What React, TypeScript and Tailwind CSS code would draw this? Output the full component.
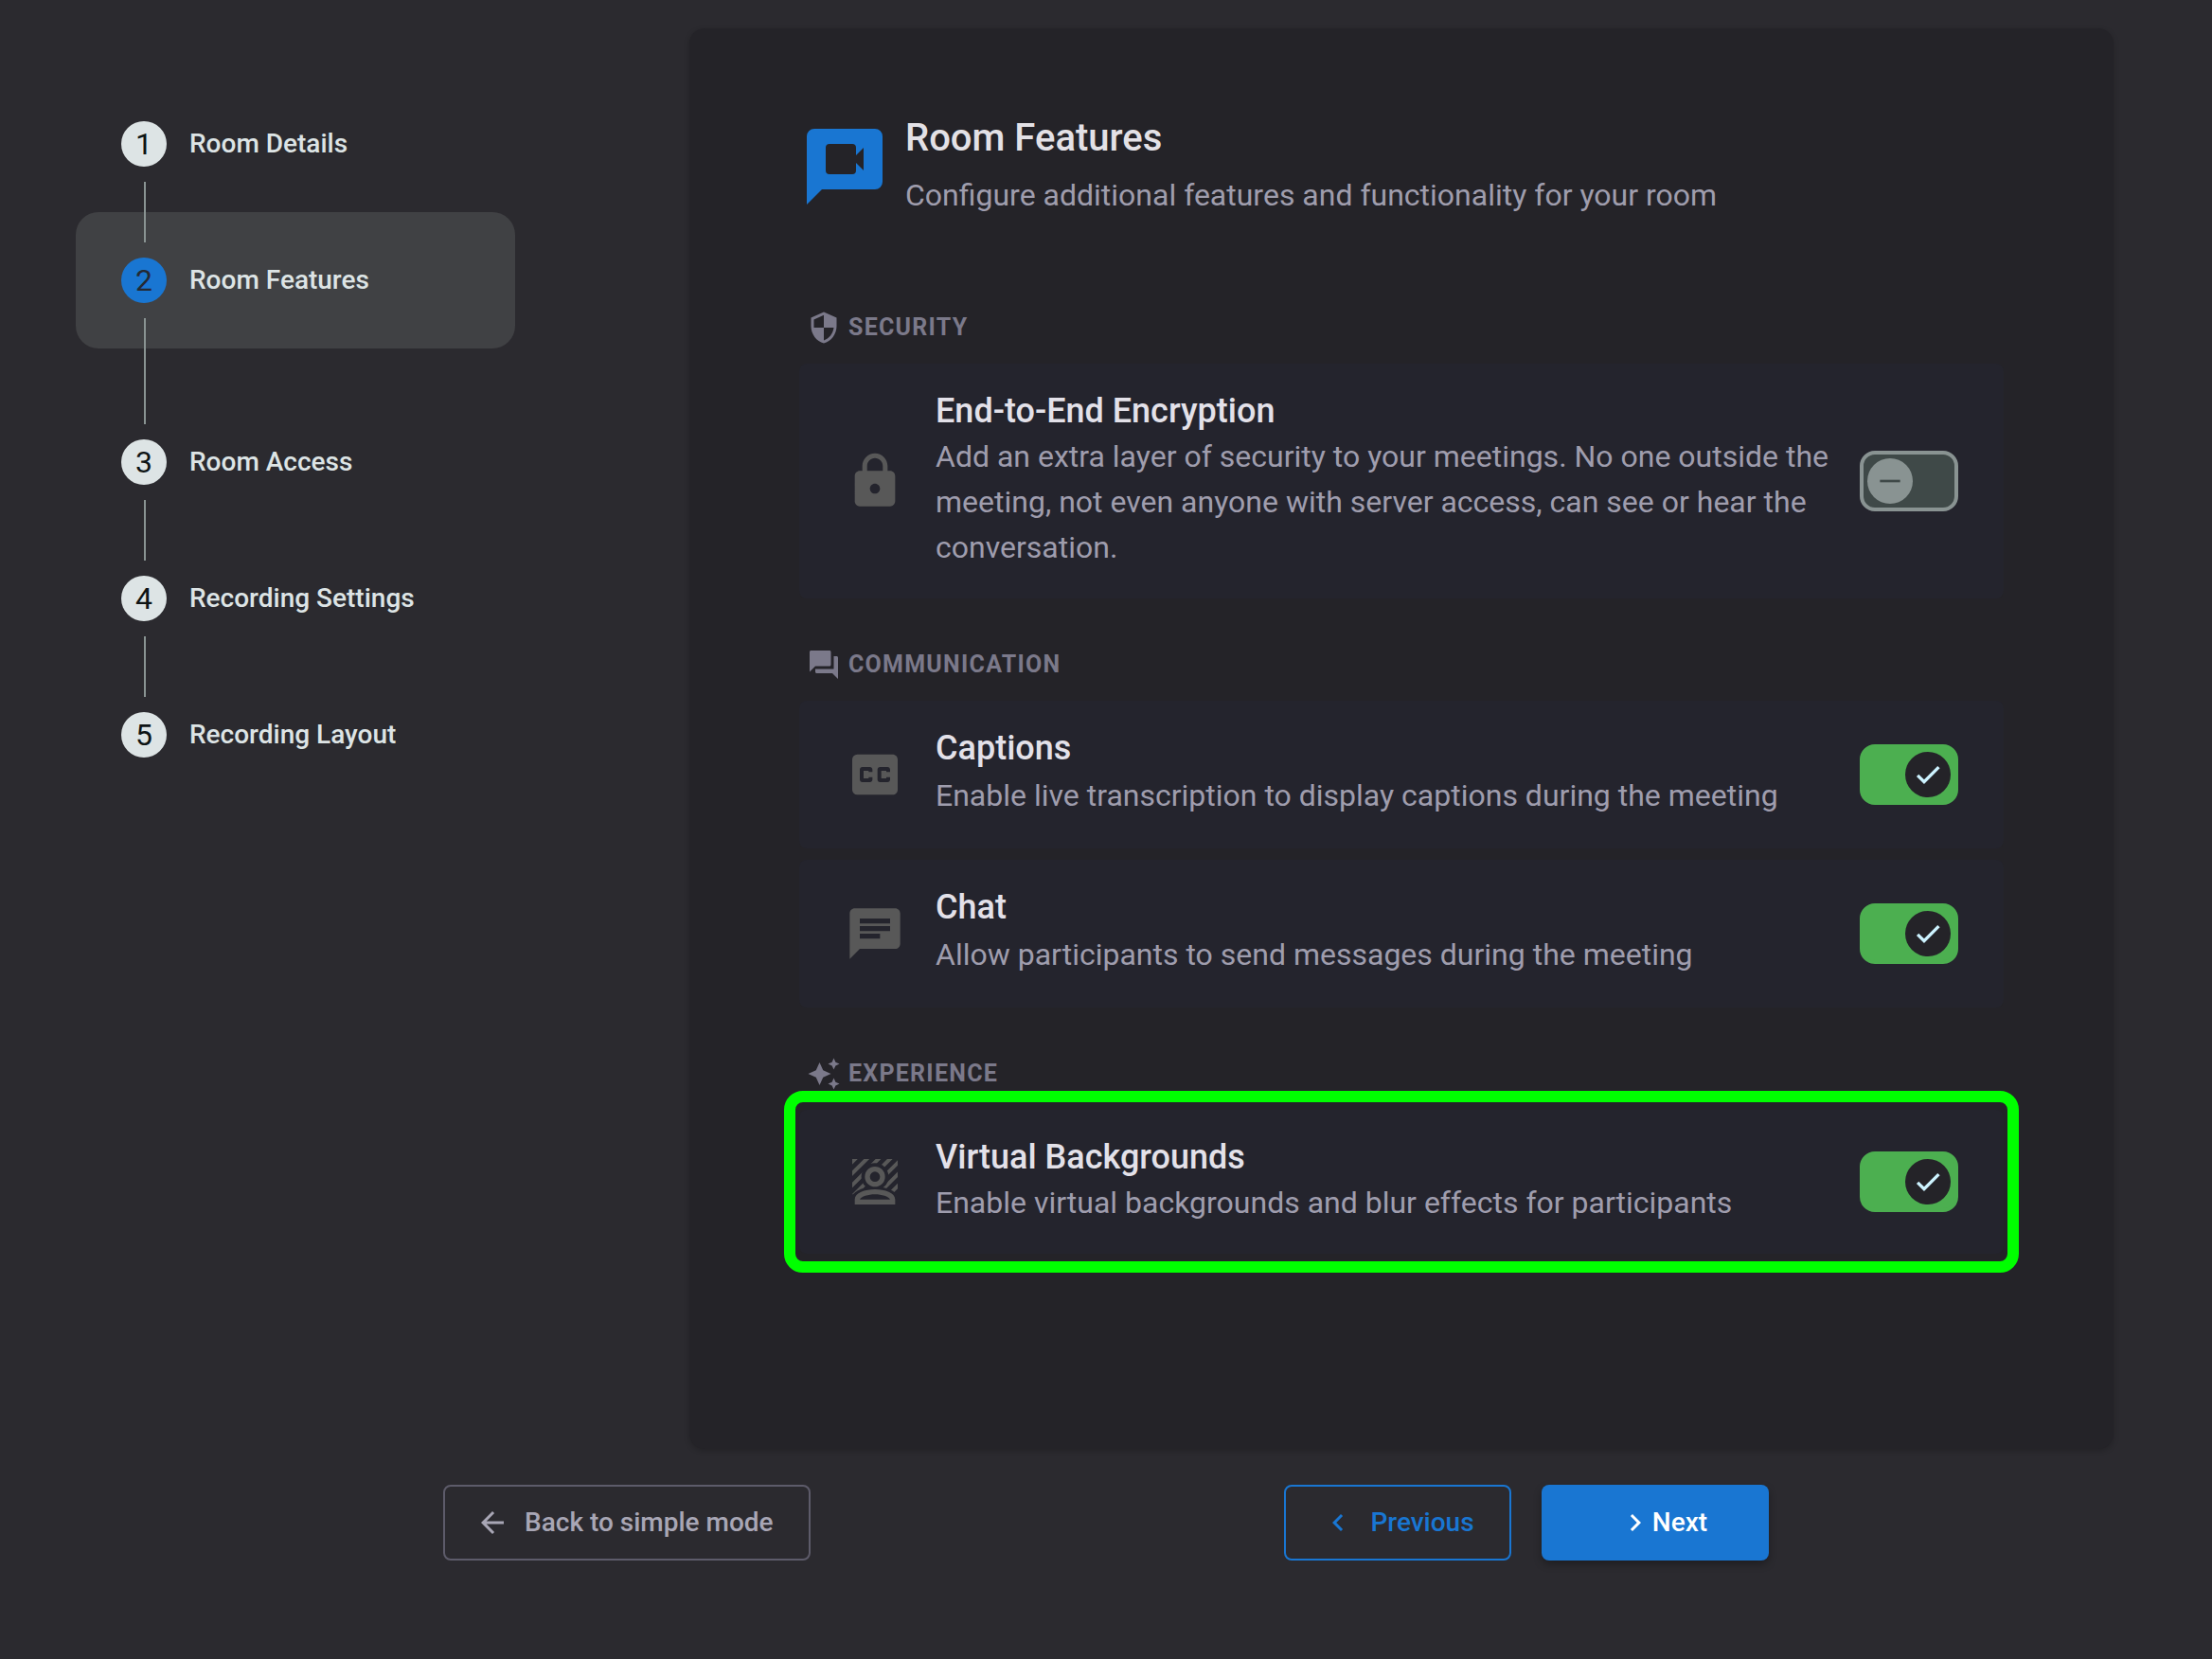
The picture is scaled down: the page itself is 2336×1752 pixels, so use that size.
import { FC, ReactNode, useState } from "react";
import {
  MdArrowBack,
  MdAutoAwesome,
  MdChat,
  MdChevronLeft,
  MdChevronRight,
  MdClosedCaption,
  MdForum,
  MdLock,
  MdSecurity,
} from "react-icons/md";

type Step = {
  id: number;
  label: string;
};

const steps: Step[] = [
  { id: 1, label: "Room Details" },
  { id: 2, label: "Room Features" },
  { id: 3, label: "Room Access" },
  { id: 4, label: "Recording Settings" },
  { id: 5, label: "Recording Layout" },
];

const VideoChatIcon: FC = () => (
  <svg
    viewBox="0 0 24 24"
    className="size-24 shrink-0 text-[#1976d2]"
    fill="currentColor"
    aria-hidden="true"
  >
    <path
      fillRule="evenodd"
      d="M4 2h16a2 2 0 0 1 2 2v12a2 2 0 0 1-2 2H6l-4 4V4a2 2 0 0 1 2-2zM8 6a1 1 0 0 0-1 1v6a1 1 0 0 0 1 1h6a1 1 0 0 0 1-1v-2l2 2V7l-2 2V7a1 1 0 0 0-1-1z"
    />
  </svg>
);

const BackgroundIcon: FC = () => (
  <svg viewBox="0 0 24 24" className="size-16" fill="currentColor" aria-hidden="true">
    {/* stripes stay clear of the head and the shoulders */}
    <mask id="stripes" maskUnits="userSpaceOnUse" x="3" y="3" width="18" height="18">
      <rect x="3" y="3" width="18" height="14" fill="white" />
      <circle cx="12" cy="10" r="5.400" fill="black" />
      <ellipse cx="12" cy="19" rx="9.500" ry="5" fill="black" />
    </mask>
    <path
      mask="url(#stripes)"
      stroke="currentColor"
      strokeWidth="1.500"
      d="M0 7.100 7.100 0M0 11.700 11.700 0M0 16.300 16.300 0M0 20.900 20.900 0M1.500 24l24-24M6.100 24l24-24M10.700 24l24-24"
    />
    <path
      fillRule="evenodd"
      d="M12 6a4 4 0 1 1 0 8 4 4 0 0 1 0-8zm0 2a2 2 0 1 0 0 4 2 2 0 0 0 0-4z"
    />
    <path
      fillRule="evenodd"
      d="M4 21v-2c0-2.600 4-4 8-4s8 1.400 8 4v2zm2-2h12c-.6-1.100-3.300-2-6-2s-5.400.9-6 2z"
    />
  </svg>
);

const Toggle: FC<{ id: string; initial: boolean }> = ({ id, initial }) => {
  const [checked, setChecked] = useState(initial);

  return (
    <span className="grid shrink-0 items-center">
      <input
        type="checkbox"
        id={id}
        checked={checked}
        onChange={() => setChecked((prev) => !prev)}
        className="col-start-1 row-start-1 h-16 w-[104px] cursor-pointer appearance-none rounded-2xl border-4 border-[#899392] bg-[#3f4948] checked:border-[#4caf50] checked:bg-[#4caf50]"
      />
      <span
        className={
          checked
            ? "pointer-events-none col-start-1 row-start-1 mr-2 flex size-12 items-center justify-center justify-self-end rounded-full bg-[#242328] text-[#cdf3ff]"
            : "pointer-events-none col-start-1 row-start-1 ml-2 flex size-12 items-center justify-center rounded-full bg-[#899392] text-[#3f4948]"
        }
      >
        <svg viewBox="0 0 24 24" className="size-8" fill="currentColor" aria-hidden="true">
          {checked ? (
            <path d="M19.690 5.230 8.960 15.960l-4.230-4.230L2.960 13.500l6 6L21.460 7z" />
          ) : (
            <path d="M20 13H4v-2h16z" />
          )}
        </svg>
      </span>
    </span>
  );
};

type FeatureProps = {
  id: string;
  title: string;
  description: string;
  icon: ReactNode;
  enabled?: boolean;
  tall?: boolean;
  highlighted?: boolean;
};

const Feature: FC<FeatureProps> = ({
  id,
  title,
  description,
  icon,
  enabled = false,
  tall = false,
  highlighted = false,
}) => (
  <div className="relative flex items-center gap-8 rounded-lg bg-[#24242d] px-12 py-7">
    <span className="shrink-0 text-[#585858]">{icon}</span>
    <div className="flex-1">
      <label htmlFor={id} className="block text-4xl/11 font-medium text-[#e3e1e9]">
        {title}
      </label>
      <p
        className={
          tall
            ? "py-0.5 text-[32px]/13 text-[#9f9dad]"
            : "py-0.5 text-[32px]/12 text-[#9f9dad]"
        }
      >
        {description}
      </p>
    </div>
    <Toggle id={id} initial={enabled} />
    {highlighted && (
      <span className="pointer-events-none absolute -inset-x-4 -inset-y-5 rounded-[20px] border-12 border-[#00ff00]" />
    )}
  </div>
);

const Section: FC<{ title: string; icon: ReactNode; children: ReactNode }> = ({
  title,
  icon,
  children,
}) => (
  <section>
    <h2 className="mb-5 flex items-center gap-2 px-2 text-[25px]/9 font-bold tracking-wider text-[#7b798a] uppercase">
      {icon}
      {title}
    </h2>
    <div className="flex flex-col gap-3">{children}</div>
  </section>
);

const Stepper: FC = () => {
  const [active, setActive] = useState(2);

  return (
    <nav className="mt-[50px] w-[464px] shrink-0">
      <ol>
        {steps.map((step, index) => (
          <li key={step.id} className={step.id === active ? "relative pb-12" : "relative"}>
            <button
              type="button"
              onClick={() => setActive(step.id)}
              className={
                step.id === active
                  ? "flex h-36 w-full items-center gap-6 rounded-3xl bg-[#404144] px-12"
                  : "flex h-36 w-full items-center gap-6 rounded-3xl px-12"
              }
            >
              <span
                className={
                  step.id === active
                    ? "flex size-12 items-center justify-center rounded-full bg-[#1976d2] text-[32px]/12 text-[#242933]"
                    : "flex size-12 items-center justify-center rounded-full bg-[#dde4e5] text-[32px]/12 text-[#0e1415]"
                }
              >
                {step.id}
              </span>
              <span className="text-[28px]/10 font-medium text-[#dde4e5]">{step.label}</span>
            </button>
            {index < steps.length - 1 && (
              <span className="absolute top-28 -bottom-8 left-18 z-10 w-0.5 bg-[#899392]" />
            )}
          </li>
        ))}
      </ol>
    </nav>
  );
};

export default function App() {
  return (
    <div className="min-h-screen bg-[#2b2a2f] pt-[30px] pb-10 font-['Roboto',sans-serif]">
      <div className="flex items-start gap-46 pr-26 pl-20">
        <Stepper />
        <main className="min-h-[1500px] flex-1 rounded-2xl bg-[#242328] px-29 pt-23 pb-29 shadow-[0_2px_6px_rgba(0,0,0,0.2)]">
          <header className="flex items-center gap-4">
            <VideoChatIcon />
            <div>
              <h1 className="text-[40px]/12 font-medium text-[#e3e1e6]">Room Features</h1>
              <p className="mt-3 text-[32px]/12 text-[#9f9dad]">
                Configure additional features and functionality for your room
              </p>
            </div>
          </header>
          <div className="mt-[98px] flex flex-col gap-13">
            <Section title="Security" icon={<MdSecurity className="size-9" />}>
              <Feature
                id="encryption"
                title="End-to-End Encryption"
                description="Add an extra layer of security to your meetings. No one outside the meeting, not even anyone with server access, can see or hear the conversation."
                icon={<MdLock className="size-16" />}
              />
            </Section>
            <Section title="Communication" icon={<MdForum className="size-9" />}>
              <Feature
                id="captions"
                title="Captions"
                description="Enable live transcription to display captions during the meeting"
                icon={<MdClosedCaption className="size-16" />}
                enabled
                tall
              />
              <Feature
                id="chat"
                title="Chat"
                description="Allow participants to send messages during the meeting"
                icon={<MdChat className="size-16" />}
                enabled
                tall
              />
            </Section>
            <Section title="Experience" icon={<MdAutoAwesome className="size-9" />}>
              <Feature
                id="backgrounds"
                title="Virtual Backgrounds"
                description="Enable virtual backgrounds and blur effects for participants"
                icon={<BackgroundIcon />}
                enabled
                highlighted
              />
            </Section>
          </div>
        </main>
      </div>
      <footer className="mx-auto mt-[38px] flex max-w-[1400px] items-center justify-between text-[28px]/10 font-medium">
        <button
          type="button"
          className="flex h-20 w-97 items-center gap-4 rounded-lg border-2 border-[#5d5b6a] px-8 text-[#a8a6b5]"
        >
          <MdArrowBack className="size-9" />
          Back to simple mode
        </button>
        <div className="flex gap-8">
          <button
            type="button"
            className="flex h-20 w-60 items-center justify-center gap-4 rounded-lg border-2 border-[#1976d2] text-[#1976d2]"
          >
            <MdChevronLeft className="size-9" />
            Previous
          </button>
          <button
            type="button"
            className="flex h-20 w-60 items-center justify-center rounded-lg bg-[#1976d2] pl-4 text-white shadow-[0_4px_8px_rgba(0,0,0,0.3)]"
          >
            <MdChevronRight className="size-9" />
            Next
          </button>
        </div>
      </footer>
    </div>
  );
}
